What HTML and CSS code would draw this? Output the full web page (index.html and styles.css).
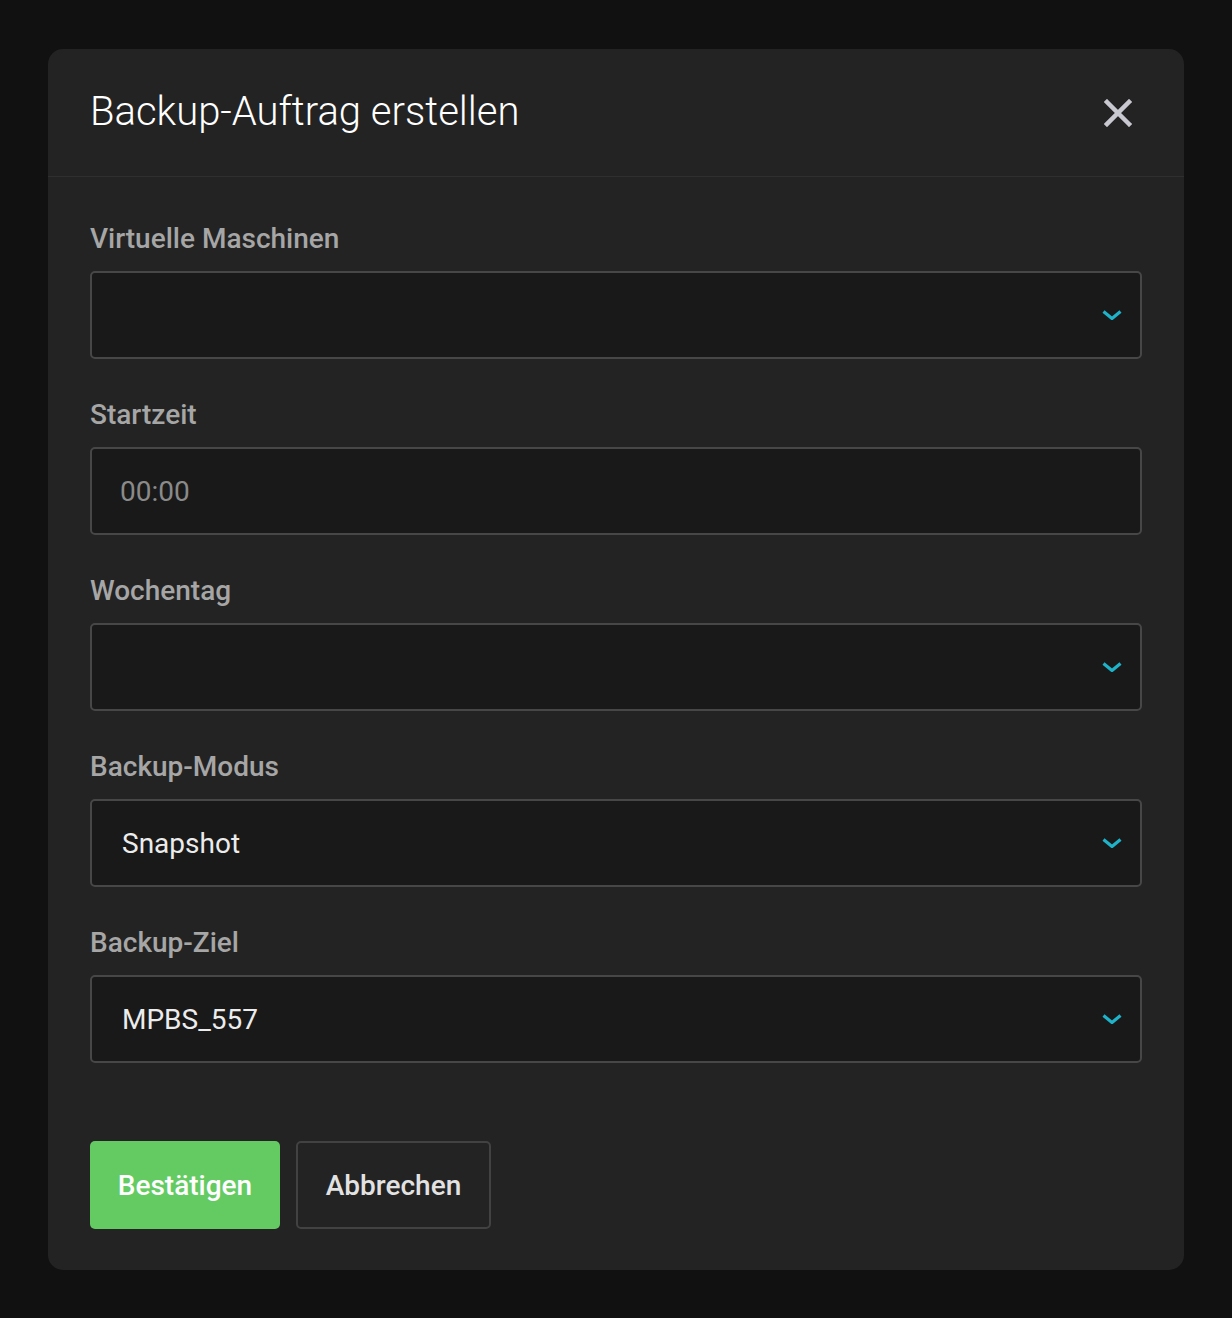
FILE: index.html
```html
<!DOCTYPE html>
<html lang="de">
<head>
    <meta charset="UTF-8">
    <meta name="viewport" content="width=device-width, initial-scale=1.0">
    <title>Backup-Auftrag erstellen</title>
    <link rel="stylesheet" href="styles.css">
</head>
<body>
    <div class="modal">
        <div class="modal-header">
            <h2>Backup-Auftrag erstellen</h2>
            <button class="close" aria-label="Schließen">
                <svg width="28" height="28" viewBox="0 0 28 28">
                    <path d="M3 3 L25 25 M25 3 L3 25" stroke="#c8c8d0" stroke-width="4.5" stroke-linecap="square" fill="none"/>
                </svg>
            </button>
        </div>
        <div class="modal-body">
            <div class="field">
                <label>Virtuelle Maschinen</label>
                <div class="select">
                    <span class="value"></span>
                    <svg class="chevron" width="20" height="10" viewBox="0 0 20 10"><path d="M1.5 1.5 L10 8.5 L18.5 1.5" stroke="#1fb2c9" stroke-width="3.2" fill="none"/></svg>
                </div>
            </div>
            <div class="field">
                <label>Startzeit</label>
                <div class="input">
                    <span class="placeholder">00:00</span>
                </div>
            </div>
            <div class="field">
                <label>Wochentag</label>
                <div class="select">
                    <span class="value"></span>
                    <svg class="chevron" width="20" height="10" viewBox="0 0 20 10"><path d="M1.5 1.5 L10 8.5 L18.5 1.5" stroke="#1fb2c9" stroke-width="3.2" fill="none"/></svg>
                </div>
            </div>
            <div class="field">
                <label>Backup-Modus</label>
                <div class="select">
                    <span class="value">Snapshot</span>
                    <svg class="chevron" width="20" height="10" viewBox="0 0 20 10"><path d="M1.5 1.5 L10 8.5 L18.5 1.5" stroke="#1fb2c9" stroke-width="3.2" fill="none"/></svg>
                </div>
            </div>
            <div class="field">
                <label>Backup-Ziel</label>
                <div class="select">
                    <span class="value">MPBS_557</span>
                    <svg class="chevron" width="20" height="10" viewBox="0 0 20 10"><path d="M1.5 1.5 L10 8.5 L18.5 1.5" stroke="#1fb2c9" stroke-width="3.2" fill="none"/></svg>
                </div>
            </div>
            <div class="actions">
                <button class="btn btn-primary">Bestätigen</button>
                <button class="btn btn-secondary">Abbrechen</button>
            </div>
        </div>
    </div>
</body>
</html>
```
FILE: styles.css
```css
body {
    margin: 0;
    background-color: #111111;
    font-family: Roboto, "Liberation Sans", sans-serif;
    padding: 49px 48px 48px;
}
.modal {
    background-color: #232323;
    border-radius: 15px;
    height: 1221px;
    box-sizing: border-box;
}
.modal-header {
    height: 127px;
    border-bottom: 1px solid #2f2f2f;
    display: flex;
    align-items: center;
    justify-content: space-between;
    padding: 0 52px 0 42px;
}
.modal-header h2 {
    margin: 0;
    font-size: 40px;
    font-weight: 300;
    color: #ffffff;
    padding-bottom: 2px;
}
.close {
    background: none;
    border: none;
    padding: 0;
    width: 28px;
    height: 28px;
    cursor: pointer;
}
.modal-body {
    padding: 43px 42px 41px;
}
.field {
    margin-bottom: 37px;
}
.field label {
    display: block;
    font-size: 28px;
    font-weight: 500;
    color: #a6a6a6;
    line-height: 37px;
    margin-bottom: 14px;
}
.select, .input {
    height: 88px;
    box-sizing: border-box;
    border: 2px solid #474747;
    border-radius: 5px;
    background-color: #191919;
    display: flex;
    align-items: center;
    justify-content: space-between;
    padding: 0 18px 0 30px;
}
.value {
    font-size: 28px;
    color: #ececec;
}
.placeholder {
    font-size: 28px;
    color: #8a8a8a;
    margin-left: -2px;
}
.actions {
    display: flex;
    gap: 16px;
    margin-top: 78px;
}
.btn {
    height: 88px;
    font-family: Roboto, "Liberation Sans", sans-serif;
    font-size: 28px;
    font-weight: 500;
    border-radius: 5px;
    cursor: pointer;
    box-sizing: border-box;
}
.btn-primary {
    width: 190px;
    background-color: #64cb63;
    color: #ffffff;
    border: none;
}
.btn-secondary {
    width: 195px;
    background-color: #232323;
    color: #e2e2e2;
    border: 2px solid #424242;
}
```
